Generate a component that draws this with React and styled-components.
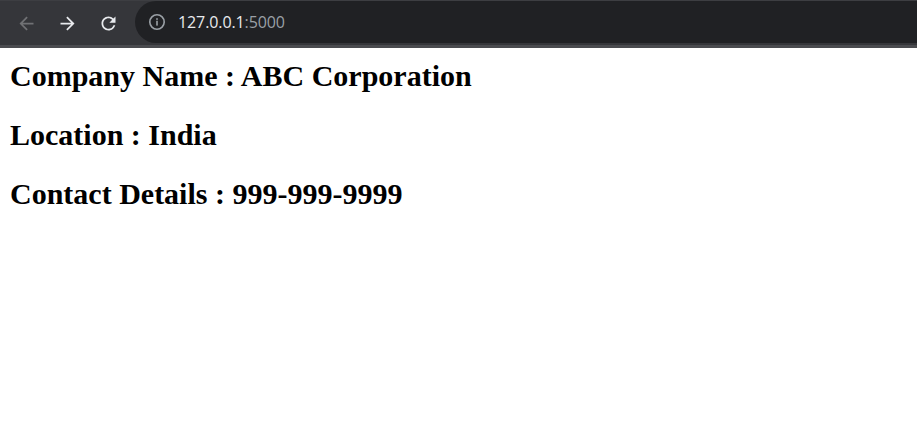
import React from 'react';
import styled, { createGlobalStyle } from 'styled-components';

const GlobalStyle = createGlobalStyle`
  html, body {
    margin: 0;
    padding: 0;
    background: #ffffff;
  }
`;

const Toolbar = styled.div`
  height: 44px;
  display: flex;
  align-items: center;
  background: #35363a;
  border-top: 1px solid #3d3e42;
  border-bottom: 3px solid #4a4b4f;
  box-sizing: content-box;
`;

const NavButtons = styled.div`
  display: flex;
  align-items: center;
  gap: 20px;
  padding: 0 16px 0 16px;
`;

const NavIcon = styled.svg`
  width: 21px;
  height: 21px;
  display: block;
  color: ${(p) => (p.disabled ? '#707174' : '#e8eaed')};
`;

const Omnibox = styled.div`
  flex: 1;
  height: 42px;
  margin-top: -2px;
  display: flex;
  align-items: center;
  gap: 12px;
  padding-left: 13px;
  background: #202124;
  border-radius: 21px 0 0 21px;
`;

const Url = styled.span`
  font-family: 'Open Sans', 'Noto Sans', sans-serif;
  font-size: 16px;
  color: #e8eaed;
  letter-spacing: -0.1px;
`;

const Port = styled.span`
  color: #9aa0a6;
`;

const Page = styled.div`
  padding: 0 8px 0 10px;
`;

const Heading = styled.h2`
  font-family: 'Liberation Serif', 'Times New Roman', serif;
  font-weight: bold;
  font-size: 30px;
  line-height: 31px;
  margin: 12px 0 28px;
  color: #000000;
`;

const App = () => {
  return (
    <>
      <GlobalStyle />
      <Toolbar>
        <NavButtons>
          <NavIcon viewBox="0 0 24 24" disabled>
            <path d="M20 11H7.83l5.59-5.59L12 4l-8 8 8 8 1.41-1.41L7.83 13H20v-2z" fill="currentColor" />
          </NavIcon>
          <NavIcon viewBox="0 0 24 24">
            <path d="M12 4l-1.41 1.41L16.17 11H4v2h12.17l-5.58 5.59L12 20l8-8z" fill="currentColor" />
          </NavIcon>
          <NavIcon viewBox="0 0 24 24">
            <path
              d="M17.65 6.35A7.958 7.958 0 0 0 12 4c-4.42 0-7.99 3.58-7.99 8s3.57 8 7.99 8c3.73 0 6.84-2.55 7.73-6h-2.08A5.99 5.99 0 0 1 12 18c-3.31 0-6-2.69-6-6s2.69-6 6-6c1.66 0 3.14.69 4.22 1.78L13 11h7V4l-2.35 2.35z"
              fill="currentColor"
            />
          </NavIcon>
        </NavButtons>
        <Omnibox>
          <svg width="18" height="18" viewBox="0 0 20 20">
            <circle cx="10" cy="10" r="8" fill="none" stroke="#9aa0a6" strokeWidth="1.8" />
            <rect x="9.1" y="8.6" width="1.8" height="5.4" fill="#9aa0a6" />
            <rect x="9.1" y="5.8" width="1.8" height="1.8" fill="#9aa0a6" />
          </svg>
          <Url>
            127.0.0.1<Port>:5000</Port>
          </Url>
        </Omnibox>
      </Toolbar>
      <Page>
        <Heading>Company Name : ABC Corporation</Heading>
        <Heading>Location : India</Heading>
        <Heading>Contact Details : 999-999-9999</Heading>
      </Page>
    </>
  );
};

export default App;
